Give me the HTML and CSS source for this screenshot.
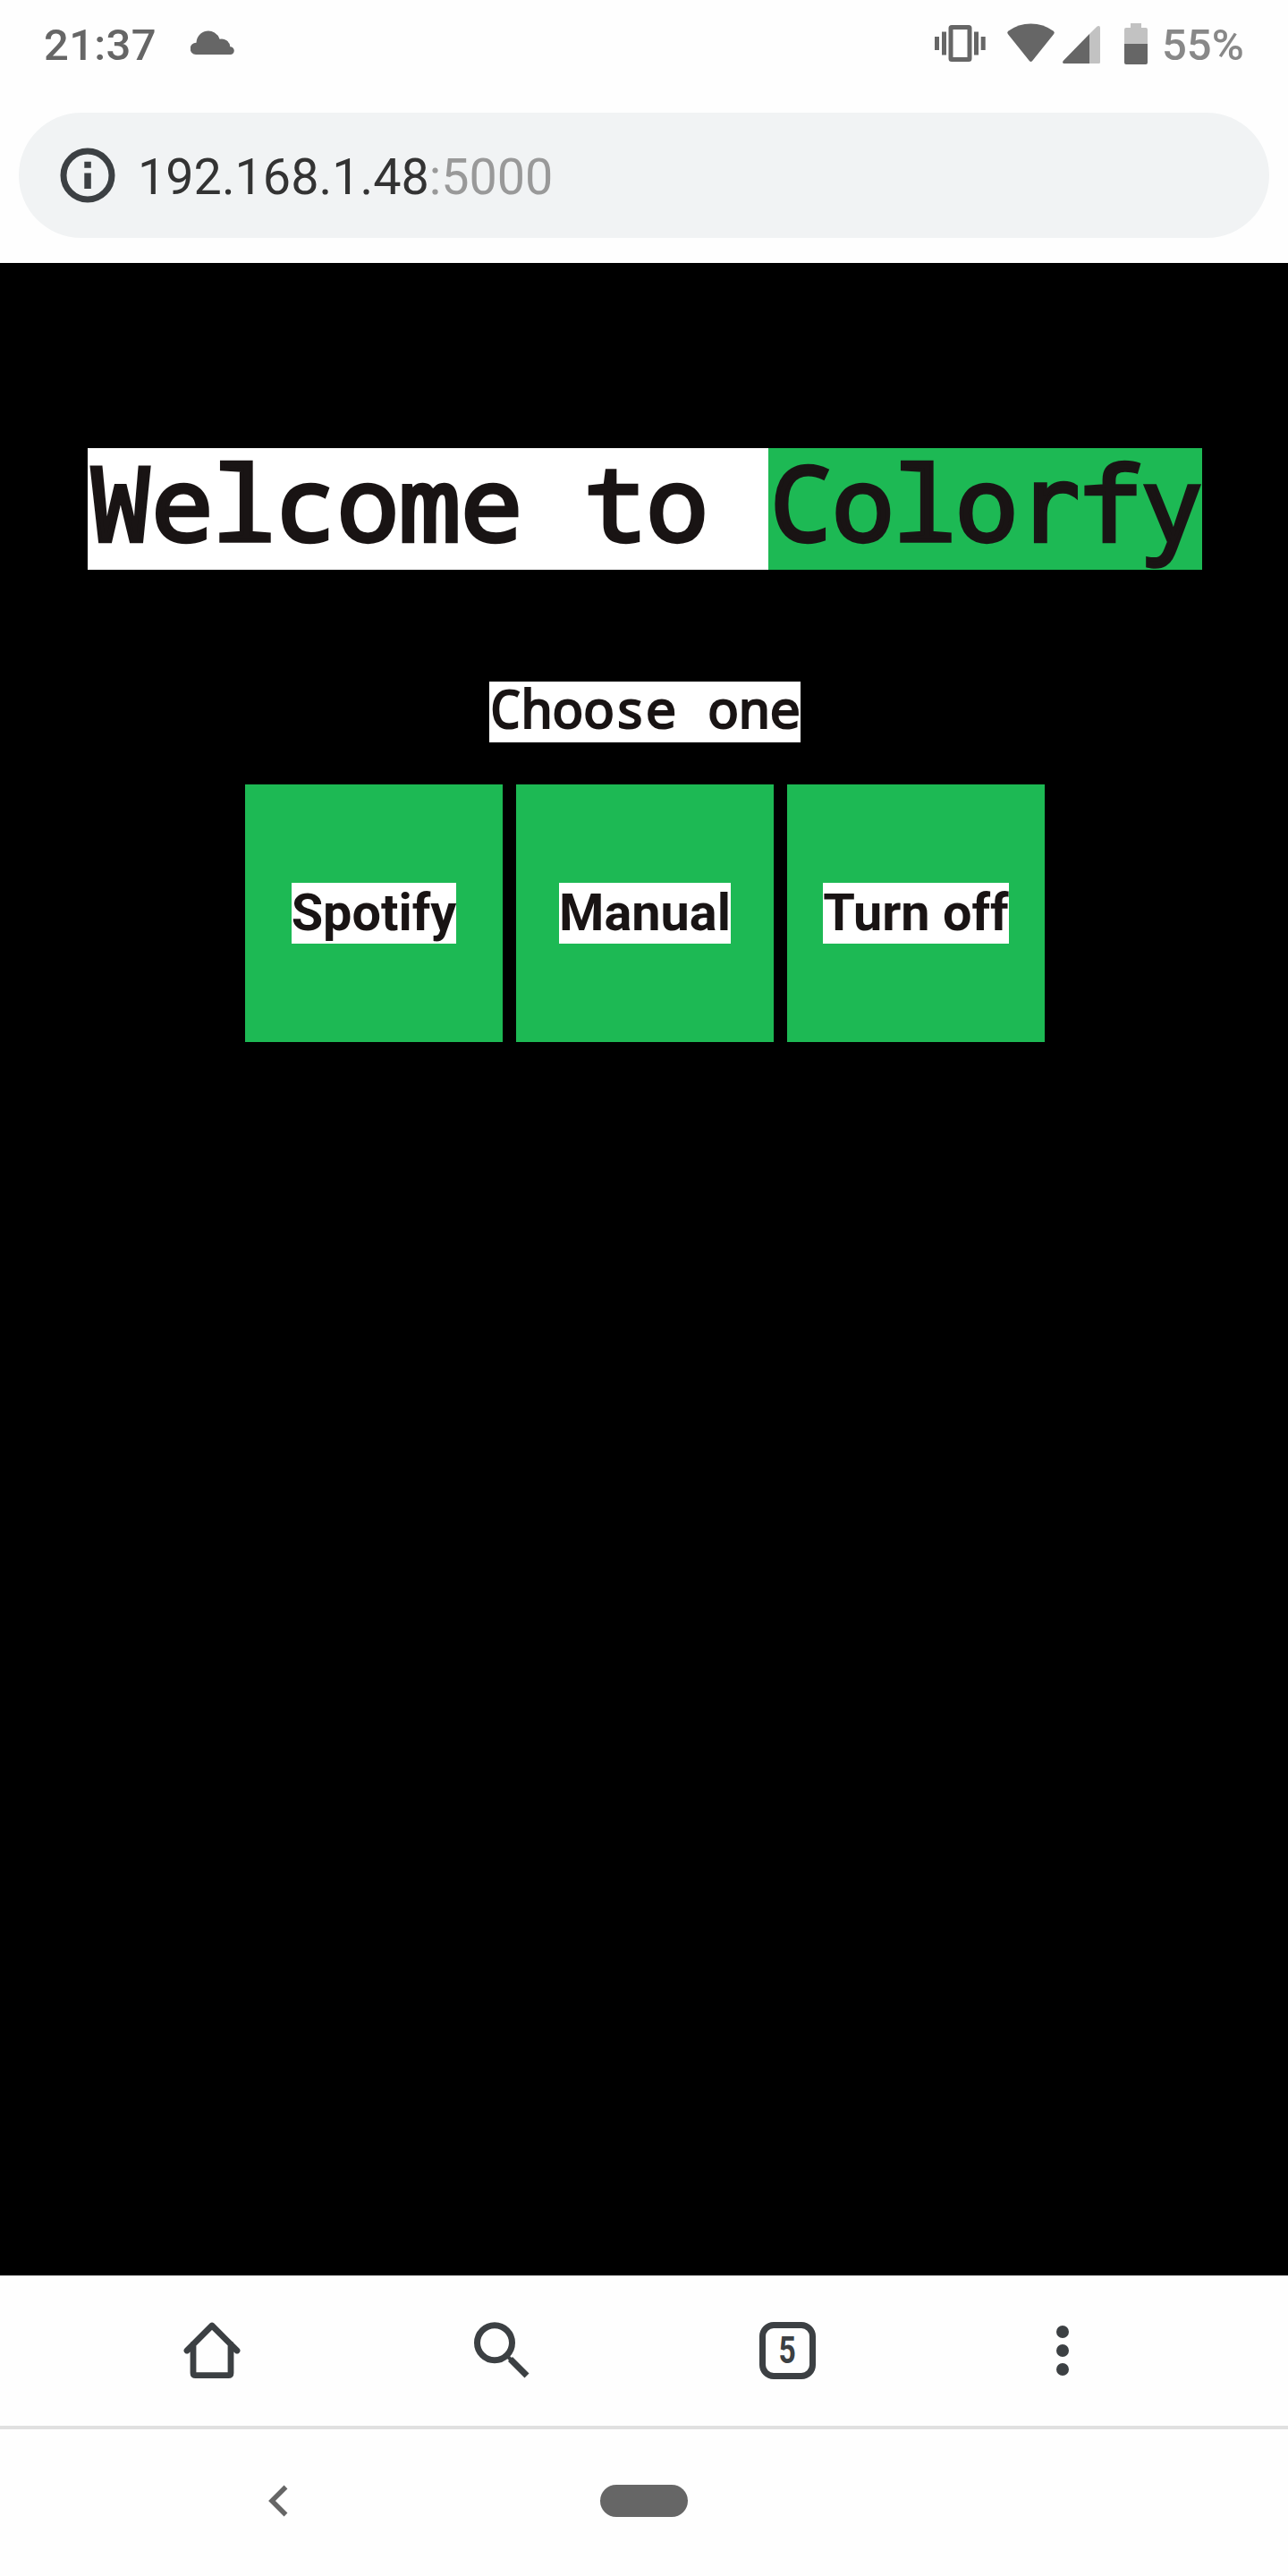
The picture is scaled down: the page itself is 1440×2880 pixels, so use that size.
FILE: index.html
```html
<!DOCTYPE html>
<html lang="en">
<head>
<meta charset="utf-8">
<title>Colorfy</title>
<link rel="stylesheet" href="styles.css">
</head>
<body>
<header class="status">
  <span class="clock">21:37</span>
  <svg class="cloud" width="50" height="28" viewBox="213 34 50 28"><path d="M219 61a6.6 6.6 0 0 1 .5-13.2A13.4 13.4 0 0 1 245.6 43.7A9.5 9.5 0 0 1 257.3 52.2A4.4 4.4 0 0 1 257.5 61Z" fill="#666"/></svg>
  <svg class="indicators" width="242" height="48" viewBox="1044 25 242 48">
    <g fill="#666">
      <path d="M1045 41h5v15h-5zM1053 35.5h5v26h-5zM1089 35.5h5v26h-5zM1096.7 41h5v15h-5z"/>
      <path fill-rule="evenodd" d="M1064 28h19a3.5 3.5 0 0 1 3.500 3.500v34a3.500 3.500 0 0 1-3.500 3.500h-19a3.500 3.500 0 0 1-3.500-3.500v-34a3.500 3.500 0 0 1 3.500-3.500zM1065.500 33v31h16v-31z"/>
      <path d="M1126.800 38q-1.400-1.800.4-3.200q11.300-8.300 25.300-8.300t25.300 8.300q1.800 1.400.4 3.200L1154 68.300q-1.500 1.400-3 0Z"/>
      <path d="M1218 38v33h-28.300q-2.700-.5-1-3Z"/>
      <path d="M1257 49h26v21q0 2-2 2h-22q-2 0-2-2z"/>
    </g>
    <g fill="#c2c2c2">
      <path d="M1218 38l8.300-8.300q2.700-1.700 3.700.8v39q0 1.500-1.500 1.500h-10.500z"/>
      <path d="M1257 49v-16q0-2 2-2h5v-5h12v5h5q2 0 2 2v16z"/>
    </g>
  </svg>
  <span class="percent">55%</span>
</header>
<div class="address">
  <svg width="62" height="62" viewBox="-31 -31 62 62"><circle r="27" fill="none" stroke="#3c4043" stroke-width="7"/><path d="M-3.700-15.200h7.500v7h-7.500zM-3.700-2.500h7.500v17.500h-7.500z" fill="#3c4043"/></svg>
  <span class="url">192.168.1.48<span class="port">:5000</span></span>
</div>
<main class="page">
  <h1 class="title"><span class="paper">Welcome to </span><span class="leaf">Colo<span class="plain">r</span>fy</span></h1>
  <h2 class="prompt"><span class="paper">Choose one</span></h2>
  <nav class="tiles">
    <a class="tile"><span class="paper">Spotify</span></a>
    <a class="tile"><span class="paper">Manual</span></a>
    <a class="tile"><span class="paper">Turn off</span></a>
  </nav>
</main>
<nav class="toolbar">
  <svg class="home" width="64" height="64" viewBox="205 2596 64 64" fill="none" stroke="#3c4043" stroke-width="6.800" stroke-linejoin="round" stroke-linecap="round"><path d="M209 2628l28-28 28 28M216 2621v32q0 2.700 2.700 2.700h36.600q2.700 0 2.700-2.700v-32"/></svg>
  <svg class="search" width="64" height="64" viewBox="529 2596 64 64" fill="none" stroke="#3c4043"><circle cx="553" cy="2619.300" r="19.500" stroke-width="7"/><path d="M566 2633l5.500 5.500" stroke-width="4"/><path d="M570.500 2637.500l18.500 18.500" stroke-width="7"/></svg>
  <div class="tabs"><span>5</span></div>
  <svg class="dots" width="16" height="64" viewBox="1180 2596 16 64" fill="#3c4043"><circle cx="1188" cy="2607" r="7"/><circle cx="1188" cy="2628" r="7"/><circle cx="1188" cy="2649" r="7"/></svg>
</nav>
<footer class="system">
  <svg class="back" width="24" height="40" viewBox="300 2776 24 40"><path d="M319.500 2780.500l-15.500 15.500 15.500 15.500" fill="none" stroke="#666" stroke-width="5.500"/></svg>
  <div class="pill"></div>
</footer>
</body>
</html>
```
FILE: styles.css
```css
* { box-sizing: border-box; }
body { margin: 0; width: 1440px; height: 2880px; display: flex; flex-direction: column; background: #fefefe; font-family: Roboto, sans-serif; overflow: hidden; }
svg { display: block; flex: none; }
.status { height: 126px; display: flex; align-items: flex-start; color: #666; font-size: 49px; line-height: 58px; font-weight: 500; }
.clock { width: 164px; margin-left: 49px; padding-top: 22px; letter-spacing: .3px; }
.cloud { margin-top: 34px; }
.indicators { margin: 25px 0 0 781px; }
.percent { margin: 22px 0 0 13px; color: #888; }
.address { height: 140px; margin: 0 21px 28px; padding-left: 46px; border-radius: 70px; background: #f1f3f4; display: flex; align-items: center; }
.url { margin-left: 25px; padding-top: 4px; font-size: 55.7px; color: #333; }
.port { color: #999; }
.page { flex: none; height: 2250px; padding-left: 2px; background: #000; color: #191414; display: flex; flex-direction: column; align-items: center; }
.paper { display: block; background: #fff; }
.leaf { display: block; background: #1db954; }
.title { height: 136px; margin: 207px 0 0; display: flex; white-space: pre; font: 400 115.3px/120px "Noto Sans Mono", monospace; -webkit-text-stroke: 4.4px #191414; }
.title > span { height: 136px; text-indent: 2px; }
.title > .paper { width: 761px; }
.title > .leaf { width: 485px; }
.plain { font-family: "DejaVu Sans Mono", monospace; letter-spacing: -.2px; }
.prompt { height: 68px; margin: 125px 0 0; font: 400 57.9px/60px "Noto Sans Mono", monospace; -webkit-text-stroke: 2.2px #191414; }
.prompt > span { width: 348px; height: 68px; text-indent: 1px; white-space: pre; }
.tiles { margin: 47px 0 0; display: flex; gap: 15px; }
.tile { width: 288px; height: 288px; background: #1db954; display: flex; align-items: center; justify-content: center; font-size: 57.6px; line-height: 68px; font-weight: 700; }
.toolbar { height: 172px; border-bottom: 4px solid #e0e0e0; display: flex; align-items: flex-start; padding: 52px 0 0 205px; flex: none; }
.search { margin-left: 260px; }
.tabs { margin-left: 256px; width: 63px; height: 64px; border: 7px solid #3c4043; border-radius: 16px; display: flex; align-items: center; justify-content: center; color: #3c4043; font-size: 42px; font-weight: 700; line-height: 50px; }
.tabs span { transform: scaleX(.8); }
.dots { margin-left: 268px; }
.system { flex: 1; display: flex; align-items: flex-start; padding-left: 300px; }
.back { margin-top: 60px; }
.pill { margin: 62px 0 0 347px; width: 98px; height: 36px; border-radius: 18px; background: #666; }
```
